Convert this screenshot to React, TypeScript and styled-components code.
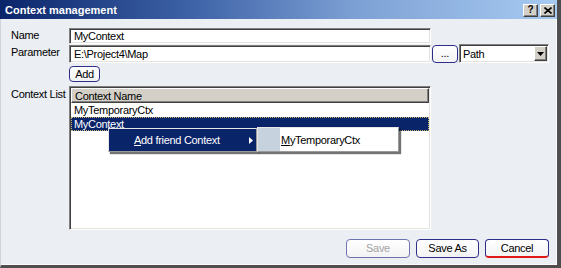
import React from "react";
import styled, { createGlobalStyle } from "styled-components";

const GlobalStyle = createGlobalStyle`
  html, body { margin: 0; padding: 0; background: #ebeef3; }
  body { font-family: "Liberation Sans", Arial, sans-serif; font-size: 11px; }
  * { box-sizing: border-box; }
`;

const FONT = `"Liberation Sans", Arial, sans-serif`;

const Window = styled.div`
  width: 561px;
  height: 268px;
  background: #ebeef3;
  border-right: 4px solid #4e4e4e;
  border-bottom: 3px solid #4e4e4e;
  border-left: 1px solid #cfd3d9;
  box-shadow: inset -1px -1px 0 #fbfbfb;
  display: flex;
  flex-direction: column;
  font-family: ${FONT};
  font-size: 11px;
  letter-spacing: -0.3px;
  color: #000;
`;

const TitleBar = styled.div`
  height: 19px;
  margin-left: -1px;
  background: linear-gradient(to right, #0a246a 0%, #3f64a8 35%, #7fa2d6 65%, #a6caf0 100%);
  display: flex;
  align-items: center;
  justify-content: space-between;
  padding: 0 2px 0 5px;
`;

const Title = styled.div`
  color: #fff;
  font-weight: bold;
  font-size: 11px;
  letter-spacing: 0;
`;

const CapButtons = styled.div`
  display: flex;
  gap: 2px;
  margin-top: 1px;
`;

const CapButton = styled.div`
  width: 15px;
  height: 13px;
  background: #d4d0c8;
  border: 1px solid;
  border-color: #fff #404040 #404040 #fff;
  box-shadow: inset -1px -1px 0 #808080;
  display: flex;
  align-items: center;
  justify-content: center;
  font-weight: bold;
  font-size: 10px;
  line-height: 1;
  letter-spacing: 0;
`;

const Body = styled.div`
  flex: 1;
  display: flex;
  flex-direction: column;
  padding: 9px 7px 0 9px;
`;

const Row = styled.div<{ $top: number; $h: number }>`
  display: flex;
  align-items: flex-start;
  margin-top: ${(p) => p.$top}px;
  height: ${(p) => p.$h}px;
`;

const Label = styled.div<{ $pad?: number }>`
  width: 59px;
  flex: none;
  padding-top: ${(p) => p.$pad ?? 2}px;
  padding-left: 1px;
`;

const Sunken = `
  border: 1px solid;
  border-color: #808080 #ffffff #ffffff #808080;
  box-shadow: inset 1px 1px 0 #404040, inset -1px -1px 0 #e4e2dc;
  background: #fff;
`;

const TextInput = styled.input<{ $h: number; $top?: number }>`
  ${Sunken}
  width: 362px;
  height: ${(p) => p.$h}px;
  margin-top: ${(p) => p.$top ?? 0}px;
  padding: 0 0 0 4px;
  font-family: ${FONT};
  font-size: 11px;
  letter-spacing: -0.3px;
  color: #000;
  outline: none;
`;

const PushButton = styled.button<{ $w: number; $h: number; $disabled?: boolean; $focus?: boolean }>`
  width: ${(p) => p.$w}px;
  height: ${(p) => p.$h}px;
  flex: none;
  padding: 0;
  border: 1px solid ${(p) => (p.$disabled ? "#6f74b0" : "#2e2e8a")};
  border-bottom: ${(p) => (p.$focus ? "2px solid #e01818" : undefined)};
  border-radius: 4px;
  background: linear-gradient(#ffffff, #f3f3f5);
  color: ${(p) => (p.$disabled ? "#a4a4a4" : "#000")};
  font-family: ${FONT};
  font-size: 11px;
  letter-spacing: -0.3px;
  line-height: 1;
  display: flex;
  align-items: center;
  justify-content: center;
`;

const DotsButton = styled(PushButton)`
  margin: 1px 0 0 1px;
  align-items: flex-end;
  padding-bottom: 3px;
`;

const Combo = styled.div`
  ${Sunken}
  width: 90px;
  height: 19px;
  margin-left: 1px;
  display: flex;
  align-items: center;
  justify-content: space-between;
  padding: 0 1px 0 3px;
`;

const DropBtn = styled.div`
  width: 13px;
  height: 15px;
  background: #d4d0c8;
  border: 1px solid;
  border-color: #fff #404040 #404040 #fff;
  box-shadow: inset -1px -1px 0 #808080;
  display: flex;
  align-items: center;
  justify-content: center;
`;

const Indent = styled.div`
  width: 59px;
  flex: none;
`;

const ListBox = styled.div`
  ${Sunken}
  width: 362px;
  height: 144px;
  position: relative;
  padding: 1px 1px 0 1px;
`;

const ListHeader = styled.div`
  height: 15px;
  background: #d4d0c8;
  border: 1px solid;
  border-color: #fff #404040 #404040 #fff;
  box-shadow: inset -1px -1px 0 #808080;
  padding-left: 3px;
  display: flex;
  align-items: center;
`;

const ListRow = styled.div<{ $sel?: boolean }>`
  height: 14px;
  padding-left: 3px;
  display: flex;
  align-items: center;
  background: ${(p) => (p.$sel ? "#0a246a" : "transparent")};
  color: ${(p) => (p.$sel ? "#fff" : "#000")};
  outline: ${(p) => (p.$sel ? "1px dotted #c9b56a" : "none")};
  outline-offset: -1px;
`;

const MenuLayer = styled.div`
  position: absolute;
  left: 38px;
  top: 41px;
  display: flex;
  align-items: flex-start;
`;

const MenuPanel = styled.div`
  width: 149px;
  height: 24px;
  border: 1px solid;
  border-color: #e6e6e6 #9a9a9a #9a9a9a #e6e6e6;
  background: #0a246a;
  box-shadow: 2px 2px 1px rgba(0, 0, 0, 0.55);
  display: flex;
`;

const MenuItem = styled.div`
  flex: 1;
  display: flex;
  align-items: center;
  justify-content: space-between;
  padding: 0 3px 0 25px;
  color: #fff;
`;

const SubPanel = styled.div`
  width: 142px;
  height: 25px;
  margin-top: -1px;
  border: 1px solid;
  border-color: #e6e6e6 #9a9a9a #9a9a9a #e6e6e6;
  background: #fff;
  box-shadow: 2px 2px 1px rgba(0, 0, 0, 0.55);
  display: flex;
`;

const SubStrip = styled.div`
  width: 22px;
  background: #c6d3df;
`;

const SubItem = styled.div`
  flex: 1;
  display: flex;
  align-items: center;
  padding-left: 1px;
`;

const Mnemonic = styled.span`
  text-decoration: underline;
`;

const ButtonBar = styled.div`
  display: flex;
  justify-content: flex-end;
  gap: 6px;
  margin-top: 9px;
  padding-right: 1px;
`;

export default function App() {
  return (
    <>
      <GlobalStyle />
      <Window>
        <TitleBar>
          <Title>Context management</Title>
          <CapButtons>
            <CapButton>?</CapButton>
            <CapButton>
              <svg width="8" height="7" viewBox="0 0 8 7">
                <path d="M0.5 0.5 L7.5 6.5 M7.5 0.5 L0.5 6.5" stroke="#000" strokeWidth="1.6" />
              </svg>
            </CapButton>
          </CapButtons>
        </TitleBar>
        <Body>
          <Row $top={0} $h={16}>
            <Label $pad={1}>Name</Label>
            <TextInput $h={16} value="MyContext" readOnly />
          </Row>
          <Row $top={0} $h={19}>
            <Label $pad={2}>Parameter</Label>
            <TextInput $h={18} $top={1} value="E:\Project4\Map" readOnly />
            <DotsButton $w={26} $h={18}>...</DotsButton>
            <Combo>
              <span>Path</span>
              <DropBtn>
                <svg width="7" height="4" viewBox="0 0 7 4">
                  <path d="M0 0 H7 L3.5 4 Z" fill="#000" />
                </svg>
              </DropBtn>
            </Combo>
          </Row>
          <Row $top={3} $h={16}>
            <Indent />
            <PushButton $w={31} $h={16}>Add</PushButton>
          </Row>
          <Row $top={4} $h={144}>
            <Label $pad={2}>Context List</Label>
            <ListBox>
              <ListHeader>Context Name</ListHeader>
              <ListRow>MyTemporaryCtx</ListRow>
              <ListRow $sel>MyContext</ListRow>
              <MenuLayer>
                <MenuPanel>
                  <MenuItem>
                    <span>
                      <Mnemonic>A</Mnemonic>dd friend Context
                    </span>
                    <svg width="4" height="7" viewBox="0 0 4 7">
                      <path d="M0 0 L4 3.5 L0 7 Z" fill="#fff" />
                    </svg>
                  </MenuItem>
                </MenuPanel>
                <SubPanel>
                  <SubStrip />
                  <SubItem>
                    <span>
                      <Mnemonic>M</Mnemonic>yTemporaryCtx
                    </span>
                  </SubItem>
                </SubPanel>
              </MenuLayer>
            </ListBox>
          </Row>
          <ButtonBar>
            <PushButton $w={64} $h={19} $disabled>Save</PushButton>
            <PushButton $w={63} $h={19}>Save As</PushButton>
            <PushButton $w={64} $h={19} $focus>Cancel</PushButton>
          </ButtonBar>
        </Body>
      </Window>
    </>
  );
}
